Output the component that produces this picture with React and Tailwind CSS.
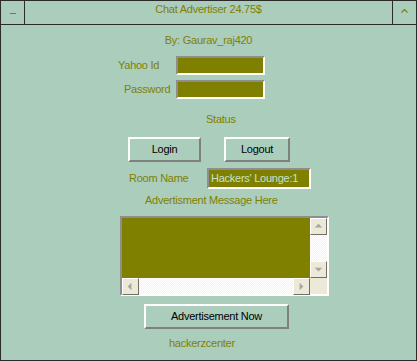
import React from "react";

const Raised = ({ className = "", children }) => (
  <div
    className={`flex items-center justify-center border-2 border-t-white border-l-white border-b-[#7f7f7f] border-r-[#7f7f7f] bg-[#abcdbc] text-black ${className}`}
  >
    {children}
  </div>
);

const Field = ({ className = "", children }) => (
  <div
    className={`flex items-center whitespace-nowrap overflow-hidden border-2 border-t-[#8e8e8e] border-l-[#8e8e8e] border-b-white border-r-white bg-[#808000] ${className}`}
  >
    {children}
  </div>
);

const ScrollBtn = ({ dir }) => {
  const pts = {
    up: "4,9 8,5 12,9",
    down: "4,6 8,10 12,6",
    left: "9,4 5,8 9,12",
    right: "6,4 10,8 6,12",
  };
  return (
    <div className="w-[17px] h-[17px] bg-[#ece9d8] border border-t-white border-l-white border-b-[#716f64] border-r-[#716f64] flex items-center justify-center">
      <svg width="15" height="15" viewBox="0 0 16 16">
        <polygon points={pts[dir]} fill="#a9a79c" />
      </svg>
    </div>
  );
};

export default function App() {
  return (
    <div
      className="w-[417px] h-[361px] border border-[#2b2b2b] bg-[#abcdbc] flex flex-col text-[11px] tracking-[-0.25px] text-[#808000]"
      style={{ fontFamily: '"Liberation Sans", Arial, sans-serif' }}
    >
      <div className="h-[24px] border-b border-[#2b2b2b] flex">
        <div className="w-[24px] border-r border-[#2b2b2b] flex items-center justify-center">
          <div className="w-[6px] h-[1px] bg-[#808000] mt-[1px]" />
        </div>
        <div className="flex-1 text-center leading-[16px]">Chat Advertiser 24.75$</div>
        <div className="w-[24px] border-l border-[#2b2b2b] flex justify-center pt-[8px]">
          <svg width="7" height="4" viewBox="0 0 7 4">
            <polyline points="0.5,3.5 3.5,0.5 6.5,3.5" fill="none" stroke="#808000" strokeWidth="1.2" />
          </svg>
        </div>
      </div>

      <div className="mt-[9px] h-[13px] leading-[13px] text-center">By: Gaurav_raj420</div>

      <div className="mt-[9px] flex items-center h-[19px]">
        <div className="w-[175px] pl-[117px]">Yahoo Id</div>
        <Field className="w-[89px] h-[19px]" />
      </div>
      <div className="mt-[5px] flex items-center h-[19px]">
        <div className="w-[175px] pl-[123px]">Password</div>
        <Field className="w-[89px] h-[19px]" />
      </div>

      <div className="mt-[14px] h-[13px] leading-[13px] pl-[205px]">Status</div>

      <div className="mt-[11px] flex h-[25px]">
        <Raised className="ml-[127px] w-[73px]">Login</Raised>
        <Raised className="ml-[23px] w-[66px]">Logout</Raised>
      </div>

      <div className="mt-[6px] flex items-center h-[21px]">
        <div className="w-[206px] pl-[128px]">Room Name</div>
        <Field className="w-[104px] h-[21px] pl-[2px] text-[#c6e3cb]">Hackers' Lounge:1</Field>
      </div>

      <div className="mt-[5px] h-[13px] leading-[13px] pl-[144px]">Advertisment Message Here</div>

      <div className="mt-[9px] ml-[119px] w-[209px] h-[80px] border-2 border-t-[#8e8e8e] border-l-[#8e8e8e] border-b-white border-r-white flex flex-col">
        <div className="flex h-[60px]">
          <div className="flex-1 bg-[#808000]" />
          <div className="w-[17px] flex flex-col bg-[repeating-conic-gradient(#f4f3ee_0_25%,#ffffff_0_50%)] bg-[length:2px_2px]">
            <ScrollBtn dir="up" />
            <div className="flex-1" />
            <ScrollBtn dir="down" />
          </div>
        </div>
        <div className="flex h-[16px]">
          <div className="flex-1 flex bg-[repeating-conic-gradient(#f4f3ee_0_25%,#ffffff_0_50%)] bg-[length:2px_2px]">
            <ScrollBtn dir="left" />
            <div className="flex-1" />
            <ScrollBtn dir="right" />
          </div>
          <div className="w-[17px] bg-[#ece9d8]" />
        </div>
      </div>

      <Raised className="mt-[8px] ml-[143px] w-[145px] h-[25px]">Advertisement Now</Raised>

      <div className="mt-[8px] h-[13px] leading-[13px] pl-[168px]">hackerzcenter</div>
    </div>
  );
}
